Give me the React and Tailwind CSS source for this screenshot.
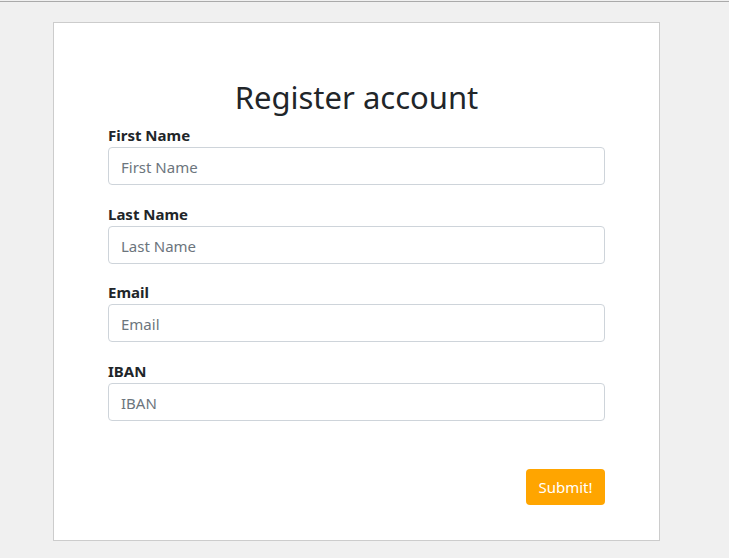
export default function App() {
  const fields = ["First Name", "Last Name", "Email", "IBAN"];
  return (
    <div className="min-h-[558px] bg-[#f0f0f0] pt-px text-[#212529]" style={{ fontFamily: '"Noto Sans", "Open Sans", sans-serif' }}>
      <div className="h-px bg-[#aaaaaa]" />
      <div className="ml-[53px] mt-[20px] w-[607px] h-[519px] border border-[#cccccc] bg-white px-[54px] pt-[55px]">
        <h2 className="text-center text-[31px] leading-[38px] mb-[7px] font-normal">Register account</h2>
        <form>
          {fields.map((f) => (
            <div key={f} className="mb-[16.67px]">
              <label className="block text-[15px] font-bold leading-[24px]">{f}</label>
              <input
                placeholder={f}
                className="block w-full h-[38px] rounded-[4px] border border-[#ced4da] px-[12px] pt-[2px] text-[15px] placeholder:text-[#6c757d] outline-none"
              />
            </div>
          ))}
          <div className="flex justify-end pt-[31px]">
            <button type="button" className="h-[36px] w-[79px] rounded-[4px] bg-[#ffa500] pt-[2px] text-white text-[15px]">Submit!</button>
          </div>
        </form>
      </div>
    </div>
  );
}
